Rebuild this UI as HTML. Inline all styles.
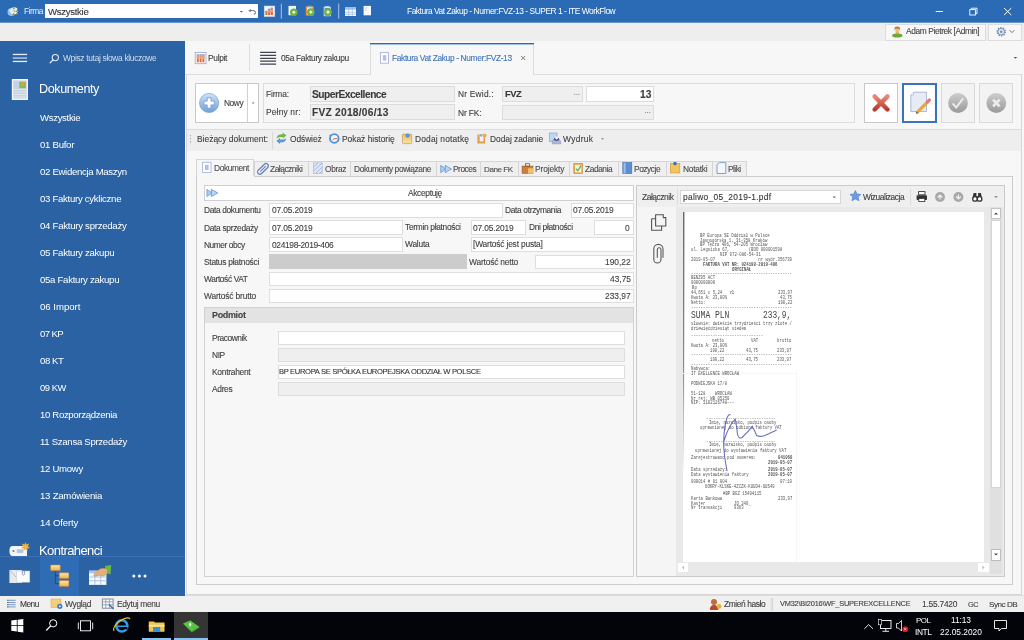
<!DOCTYPE html>
<html><head><meta charset="utf-8"><style>
html,body{margin:0;padding:0}
body{width:1024px;height:640px;overflow:hidden;position:relative;font-family:"Liberation Sans",sans-serif;background:#f7f7f7}
.a{position:absolute}
.t{position:absolute;white-space:nowrap;will-change:transform;-webkit-text-stroke:0.1px currentColor}
svg{position:absolute;overflow:visible}
.r{position:absolute;white-space:pre;font-family:"Liberation Mono",monospace;transform-origin:0 50%}
</style></head><body>
<div class=a style='left:0px;top:0px;width:1024px;height:22px;background:#2b6bb6;'></div><div class=a style='left:45px;top:4px;width:213px;height:14px;background:#ffffff;'></div><div class=a style='left:0px;top:22px;width:1024px;height:19px;background:#eeeeee;'></div><div class=a style='left:0px;top:22px;width:1024px;height:1px;background:#6592c7;'></div><div class=a style='left:885px;top:24px;width:101px;height:17px;background:#f7f7f7;border:1px solid #dddddd;box-sizing:border-box;'></div><div class=a style='left:988px;top:24px;width:34px;height:17px;background:#f7f7f7;border:1px solid #dddddd;box-sizing:border-box;'></div><div class=a style='left:0px;top:41px;width:185px;height:555px;background:#2a62a3;'></div><div class=a style='left:0px;top:556px;width:185px;height:1px;background:#3a72b5;'></div><div class=a style='left:40px;top:557px;width:39px;height:39px;background:#2e6cb6;'></div><div class=a style='left:185px;top:41px;width:839px;height:555px;background:#f7f7f7;'></div><div class=a style='left:185px;top:74px;width:837px;height:1px;background:#dcdcdc;'></div><div class=a style='left:249px;top:44px;width:1px;height:27px;background:#dedede;'></div><div class=a style='left:370px;top:43px;width:164px;height:32px;background:#f7f7f7;border:1px solid #dcdcdc;box-sizing:border-box;border-bottom:none;'></div><div class=a style='left:370px;top:43px;width:164px;height:1px;background:#2b6cb8;'></div><div class=a style='left:370px;top:44px;width:164px;height:1px;background:#9dbde3;'></div><div class=a style='left:186px;top:74px;width:836px;height:521px;border:1px solid #d6d6d6;box-sizing:border-box;border-top:none;'></div><div class=a style='left:195px;top:83px;width:64px;height:40px;background:#ffffff;border:1px solid #c9c9c9;box-sizing:border-box;'></div><div class=a style='left:247px;top:84px;width:1px;height:38px;background:#d0d0d0;'></div><div class=a style='left:263px;top:83px;width:592px;height:40px;background:#f7f7f7;border:1px solid #dcdcdc;box-sizing:border-box;'></div><div class=a style='left:310px;top:86px;width:145px;height:16px;background:#efefef;border:1px solid #dcdcdc;box-sizing:border-box;'></div><div class=a style='left:310px;top:104px;width:145px;height:16px;background:#efefef;border:1px solid #dcdcdc;box-sizing:border-box;'></div><div class=a style='left:502px;top:86px;width:81px;height:16px;background:#efefef;border:1px solid #dcdcdc;box-sizing:border-box;'></div><div class=a style='left:586px;top:86px;width:68px;height:16px;background:#ffffff;border:1px solid #dcdcdc;box-sizing:border-box;'></div><div class=a style='left:502px;top:105px;width:152px;height:15px;background:#efefef;border:1px solid #dcdcdc;box-sizing:border-box;'></div><div class=a style='left:864px;top:83px;width:34px;height:40px;background:#ffffff;border:1px solid #c9c9c9;box-sizing:border-box;'></div><div class=a style='left:902px;top:83px;width:35px;height:40px;background:#ffffff;border:1px solid #3b73b9;box-sizing:border-box;border-width:2px;'></div><div class=a style='left:941px;top:83px;width:34px;height:40px;background:#f3f3f3;border:1px solid #d9d9d9;box-sizing:border-box;'></div><div class=a style='left:979px;top:83px;width:34px;height:40px;background:#f3f3f3;border:1px solid #d9d9d9;box-sizing:border-box;'></div><div class=a style='left:186px;top:129px;width:836px;height:1px;background:#dcdcdc;'></div><div class=a style='left:187px;top:130px;width:834px;height:21px;background:#eeeeee;'></div><div class=a style='left:272px;top:132px;width:1px;height:17px;background:#d8d8d8;'></div><div class=a style='left:196px;top:159px;width:58px;height:18px;background:#f7f7f7;border:1px solid #d6d6d6;box-sizing:border-box;border-bottom:none;'></div><div class=a style='left:254px;top:161px;width:55px;height:16px;background:#efefef;border:1px solid #d6d6d6;box-sizing:border-box;'></div><div class=a style='left:308px;top:161px;width:43px;height:16px;background:#efefef;border:1px solid #d6d6d6;box-sizing:border-box;'></div><div class=a style='left:350px;top:161px;width:87px;height:16px;background:#efefef;border:1px solid #d6d6d6;box-sizing:border-box;'></div><div class=a style='left:436px;top:161px;width:45px;height:16px;background:#efefef;border:1px solid #d6d6d6;box-sizing:border-box;'></div><div class=a style='left:480px;top:161px;width:39px;height:16px;background:#efefef;border:1px solid #d6d6d6;box-sizing:border-box;'></div><div class=a style='left:518px;top:161px;width:52px;height:16px;background:#efefef;border:1px solid #d6d6d6;box-sizing:border-box;'></div><div class=a style='left:569px;top:161px;width:50px;height:16px;background:#efefef;border:1px solid #d6d6d6;box-sizing:border-box;'></div><div class=a style='left:618px;top:161px;width:49px;height:16px;background:#efefef;border:1px solid #d6d6d6;box-sizing:border-box;'></div><div class=a style='left:666px;top:161px;width:47px;height:16px;background:#efefef;border:1px solid #d6d6d6;box-sizing:border-box;'></div><div class=a style='left:712px;top:161px;width:35px;height:16px;background:#efefef;border:1px solid #d6d6d6;box-sizing:border-box;'></div><div class=a style='left:196px;top:176px;width:817px;height:409px;border:1px solid #cdcdcd;box-sizing:border-box;'></div><div class=a style='left:197px;top:176px;width:57px;height:1px;background:#f7f7f7;'></div><div class=a style='left:204px;top:185px;width:430px;height:16px;background:#ffffff;border:1px solid #d0d0d0;box-sizing:border-box;'></div><div class=a style='left:269px;top:203px;width:234px;height:15px;background:#ffffff;border:1px solid #dedede;box-sizing:border-box;'></div><div class=a style='left:571px;top:203px;width:63px;height:15px;background:#ffffff;border:1px solid #dedede;box-sizing:border-box;'></div><div class=a style='left:269px;top:220px;width:134px;height:15px;background:#ffffff;border:1px solid #dedede;box-sizing:border-box;'></div><div class=a style='left:471px;top:220px;width:55px;height:15px;background:#ffffff;border:1px solid #dedede;box-sizing:border-box;'></div><div class=a style='left:594px;top:220px;width:40px;height:15px;background:#ffffff;border:1px solid #dedede;box-sizing:border-box;'></div><div class=a style='left:269px;top:237px;width:134px;height:15px;background:#ffffff;border:1px solid #dedede;box-sizing:border-box;'></div><div class=a style='left:471px;top:237px;width:163px;height:15px;background:#ffffff;border:1px solid #dedede;box-sizing:border-box;'></div><div class=a style='left:269px;top:254px;width:198px;height:15px;background:#cccccc;'></div><div class=a style='left:535px;top:255px;width:99px;height:14px;background:#ffffff;border:1px solid #dedede;box-sizing:border-box;'></div><div class=a style='left:269px;top:272px;width:365px;height:14px;background:#ffffff;border:1px solid #dedede;box-sizing:border-box;'></div><div class=a style='left:269px;top:289px;width:365px;height:14px;background:#ffffff;border:1px solid #dedede;box-sizing:border-box;'></div><div class=a style='left:204px;top:307px;width:430px;height:270px;border:1px solid #d2d2d2;box-sizing:border-box;'></div><div class=a style='left:205px;top:308px;width:428px;height:15px;background:#e3e3e3;'></div><div class=a style='left:278px;top:331px;width:347px;height:14px;background:#ffffff;border:1px solid #dedede;box-sizing:border-box;'></div><div class=a style='left:278px;top:348px;width:347px;height:14px;background:#efefef;border:1px solid #efefef;box-sizing:border-box;'></div><div class=a style='left:278px;top:348px;width:347px;height:14px;border:1px solid #dedede;box-sizing:border-box;'></div><div class=a style='left:278px;top:365px;width:347px;height:14px;background:#ffffff;border:1px solid #dedede;box-sizing:border-box;'></div><div class=a style='left:278px;top:382px;width:347px;height:14px;background:#efefef;border:1px solid #efefef;box-sizing:border-box;'></div><div class=a style='left:278px;top:382px;width:347px;height:14px;border:1px solid #dedede;box-sizing:border-box;'></div><div class=a style='left:636px;top:185px;width:369px;height:392px;background:#f5f5f5;border:1px solid #cbcbcb;box-sizing:border-box;'></div><div class=a style='left:637px;top:186px;width:367px;height:21px;background:#efefef;'></div><div class=a style='left:677px;top:188px;width:1px;height:17px;background:#dddddd;'></div><div class=a style='left:680px;top:190px;width:161px;height:14px;background:#ffffff;border:1px solid #d6d6d6;box-sizing:border-box;'></div><div class=a style='left:910px;top:189px;width:1px;height:16px;background:#dddddd;'></div><div class=a style='left:676px;top:207px;width:328px;height:369px;background:#e9e9e9;'></div><div class=a style='left:683px;top:212px;width:301px;height:350px;background:#ffffff;'></div><div class=a style='left:683px;top:212px;width:1px;height:350px;background:linear-gradient(#6a6a6a,#8a8a8a 45%,rgba(160,160,160,0) 75%);'></div><div class=a style='left:684px;top:212px;width:1px;height:208px;background:linear-gradient(rgba(120,120,120,0.5),rgba(200,200,200,0));'></div><div class=a style='left:678px;top:563px;width:10px;height:9px;background:#ffffff;'></div><div class=a style='left:796px;top:370px;width:1px;height:192px;background:#f6f6f6;'></div><div class=a style='left:683px;top:373px;width:113px;height:1px;background:#f7f7f7;'></div><div class=a style='left:990px;top:207px;width:12px;height:367px;background:#e0e0e0;'></div><div class=a style='left:991px;top:208px;width:10px;height:11px;background:#ffffff;border:1px solid #c4c4c4;box-sizing:border-box;'></div><div class=a style='left:991px;top:220px;width:10px;height:268px;background:#ffffff;border:1px solid #d4d4d4;box-sizing:border-box;'></div><div class=a style='left:991px;top:549px;width:10px;height:12px;background:#ffffff;border:1px solid #bdbdbd;box-sizing:border-box;'></div><div class=a style='left:978px;top:563px;width:11px;height:9px;background:#ffffff;'></div><div class=a style='left:0px;top:596px;width:1024px;height:16px;background:#f0f0f0;'></div><div class=a style='left:185px;top:595px;width:839px;height:1px;background:#dcdcdc;'></div><div class=a style='left:772px;top:598px;width:1px;height:13px;background:#d6d6d6;'></div><div class=a style='left:0px;top:612px;width:1024px;height:28px;background:#03040a;'></div><div class=a style='left:174px;top:612px;width:34px;height:28px;background:#353535;'></div><div class=a style='left:142px;top:638px;width:29px;height:2px;background:#88c2ee;'></div><div class=a style='left:174px;top:638px;width:34px;height:2px;background:#88c2ee;'></div>
<div style='position:absolute;left:0;top:0;width:1024px;height:640px;filter:blur(0.3px)'><div class=r style='left:700.30px;top:233.30px;height:6px;line-height:6px;font-size:5.2px;transform:scaleX(0.772);color:#555;'>BP Europa SE Oddział w Polsce</div><div class=r style='left:699.50px;top:237.60px;height:6px;line-height:6px;font-size:5.2px;transform:scaleX(0.772);color:#555;'>Jasnogórska 1, 31-358 Kraków</div><div class=r style='left:700.30px;top:242.20px;height:6px;line-height:6px;font-size:5.2px;transform:scaleX(0.772);color:#555;'>BP Tęcza 406, 54-205 Wrocław</div><div class=r style='left:690.60px;top:247.30px;height:6px;line-height:6px;font-size:5.2px;transform:scaleX(0.772);color:#555;'>ul. Legnicka 67,        (BDO 000001598</div><div class=r style='left:720.30px;top:252.30px;height:6px;line-height:6px;font-size:5.2px;transform:scaleX(0.772);color:#555;'>NIP 972-086-54-31</div><div class=r style='left:690.60px;top:257.00px;height:6px;line-height:6px;font-size:5.2px;transform:scaleX(0.772);color:#555;'>2019-05-07                  nr wydr.356739</div><div class=r style='left:703.00px;top:261.80px;height:6px;line-height:6px;font-size:5.2px;transform:scaleX(0.772);color:#555;font-weight:700;'>FAKTURA VAT NR: 024198-2019-406</div><div class=r style='left:731.60px;top:266.50px;height:6px;line-height:6px;font-size:5.2px;transform:scaleX(0.772);color:#555;font-weight:700;'>ORYGINAŁ</div><div class=r style='left:690.60px;top:271.20px;height:6px;line-height:6px;font-size:5.2px;transform:scaleX(0.772);color:#6a6a6a;'>------------------------------------------</div><div class=r style='left:690.60px;top:275.40px;height:6px;line-height:6px;font-size:5.2px;transform:scaleX(0.772);color:#555;'>BENZ95 ACT</div><div class=r style='left:690.60px;top:280.10px;height:6px;line-height:6px;font-size:5.2px;transform:scaleX(0.772);color:#555;'>0000000000</div><div class=r style='left:692.00px;top:284.50px;height:6px;line-height:6px;font-size:5.2px;transform:scaleX(0.772);color:#555;'>Bp</div><div class=r style='left:690.60px;top:290.30px;height:6px;line-height:6px;font-size:5.2px;transform:scaleX(0.772);color:#555;'>44,651 x 5,24   zł</div><div class=r style='left:777.54px;top:290.30px;height:6px;line-height:6px;font-size:5.2px;transform:scaleX(0.772);color:#555;'>233,97</div><div class=r style='left:690.60px;top:294.60px;height:6px;line-height:6px;font-size:5.2px;transform:scaleX(0.772);color:#555;'>Kwota A: 23,00%</div><div class=r style='left:779.95px;top:294.60px;height:6px;line-height:6px;font-size:5.2px;transform:scaleX(0.772);color:#555;'>43,75</div><div class=r style='left:690.60px;top:299.50px;height:6px;line-height:6px;font-size:5.2px;transform:scaleX(0.772);color:#555;'>Netto:</div><div class=r style='left:777.54px;top:299.50px;height:6px;line-height:6px;font-size:5.2px;transform:scaleX(0.772);color:#555;'>190,22</div><div class=r style='left:690.60px;top:304.50px;height:6px;line-height:6px;font-size:5.2px;transform:scaleX(0.772);color:#6a6a6a;'>------------------------------------------</div><div class=r style='left:690.60px;top:311.50px;height:6px;line-height:6px;font-size:11.5px;transform:scaleX(0.696);color:#444;'>SUMA PLN</div><div class=r style='left:762.80px;top:311.50px;height:6px;line-height:6px;font-size:11.5px;transform:scaleX(0.681);color:#444;'>233,9,</div><div class=r style='left:690.60px;top:321.40px;height:6px;line-height:6px;font-size:5.2px;transform:scaleX(0.772);color:#555;'>słownie: dwieście trzydzieści trzy złote /</div><div class=r style='left:690.60px;top:325.90px;height:6px;line-height:6px;font-size:5.2px;transform:scaleX(0.772);color:#555;'>dziewięćdziesiąt siedem</div><div class=r style='left:690.60px;top:333.40px;height:6px;line-height:6px;font-size:5.2px;transform:scaleX(0.772);color:#6a6a6a;'>------------------------------</div><div class=r style='left:712.00px;top:338.00px;height:6px;line-height:6px;font-size:5.2px;transform:scaleX(0.772);color:#555;'>netto</div><div class=r style='left:751.00px;top:338.00px;height:6px;line-height:6px;font-size:5.2px;transform:scaleX(0.772);color:#555;'>VAT</div><div class=r style='left:776.54px;top:338.00px;height:6px;line-height:6px;font-size:5.2px;transform:scaleX(0.772);color:#555;'>brutto</div><div class=r style='left:690.60px;top:342.80px;height:6px;line-height:6px;font-size:5.2px;transform:scaleX(0.772);color:#555;'>Kwota A: 23,00%</div><div class=r style='left:710.04px;top:347.80px;height:6px;line-height:6px;font-size:5.2px;transform:scaleX(0.772);color:#555;'>190,22</div><div class=r style='left:746.45px;top:347.80px;height:6px;line-height:6px;font-size:5.2px;transform:scaleX(0.772);color:#555;'>43,75</div><div class=r style='left:776.54px;top:347.80px;height:6px;line-height:6px;font-size:5.2px;transform:scaleX(0.772);color:#555;'>233,97</div><div class=r style='left:690.60px;top:352.20px;height:6px;line-height:6px;font-size:5.2px;transform:scaleX(0.772);color:#6a6a6a;'>------------------------------------------</div><div class=r style='left:710.04px;top:357.30px;height:6px;line-height:6px;font-size:5.2px;transform:scaleX(0.772);color:#555;'>190,22</div><div class=r style='left:746.45px;top:357.30px;height:6px;line-height:6px;font-size:5.2px;transform:scaleX(0.772);color:#555;'>43,75</div><div class=r style='left:776.54px;top:357.30px;height:6px;line-height:6px;font-size:5.2px;transform:scaleX(0.772);color:#555;'>233,97</div><div class=r style='left:690.60px;top:362.30px;height:6px;line-height:6px;font-size:5.2px;transform:scaleX(0.772);color:#6a6a6a;'>------------------------------------------</div><div class=r style='left:690.60px;top:366.20px;height:6px;line-height:6px;font-size:5.2px;transform:scaleX(0.772);color:#555;'>Nabywca:</div><div class=r style='left:690.60px;top:371.20px;height:6px;line-height:6px;font-size:5.2px;transform:scaleX(0.772);color:#555;'>IT EXELLENCE WROCŁAW</div><div class=r style='left:690.60px;top:381.00px;height:6px;line-height:6px;font-size:5.2px;transform:scaleX(0.772);color:#555;'>PODWIEJSKA 17/8</div><div class=r style='left:690.60px;top:390.60px;height:6px;line-height:6px;font-size:5.2px;transform:scaleX(0.772);color:#555;'>51-128    WROCŁAW</div><div class=r style='left:690.60px;top:395.50px;height:6px;line-height:6px;font-size:5.2px;transform:scaleX(0.772);color:#555;'>Nr rej: WB 05250</div><div class=r style='left:690.60px;top:400.20px;height:6px;line-height:6px;font-size:5.2px;transform:scaleX(0.772);color:#555;'>NIP: 1102126748---</div><div class=r style='left:706.40px;top:415.50px;height:6px;line-height:6px;font-size:5.2px;transform:scaleX(0.772);color:#6a6a6a;'>-----------------------------</div><div class=r style='left:708.50px;top:419.50px;height:6px;line-height:6px;font-size:5.2px;transform:scaleX(0.772);color:#555;'>Imię, nazwisko, podpis osoby</div><div class=r style='left:700.30px;top:424.60px;height:6px;line-height:6px;font-size:5.2px;transform:scaleX(0.772);color:#555;'>uprawnionej do odbioru faktury VAT</div><div class=r style='left:706.40px;top:438.80px;height:6px;line-height:6px;font-size:5.2px;transform:scaleX(0.772);color:#6a6a6a;'>-----------------------------</div><div class=r style='left:708.50px;top:442.30px;height:6px;line-height:6px;font-size:5.2px;transform:scaleX(0.772);color:#555;'>Imię, nazwisko, podpis osoby</div><div class=r style='left:695.00px;top:447.60px;height:6px;line-height:6px;font-size:5.2px;transform:scaleX(0.772);color:#555;'>uprawnionej do wystawienia faktury VAT</div><div class=r style='left:690.60px;top:454.90px;height:6px;line-height:6px;font-size:5.2px;transform:scaleX(0.772);color:#555;'>Zarejestrowano pod numerem:</div><div class=r style='left:777.84px;top:454.90px;height:6px;line-height:6px;font-size:5.2px;transform:scaleX(0.772);color:#555;font-weight:700;'>041068</div><div class=r style='left:768.20px;top:459.60px;height:6px;line-height:6px;font-size:5.2px;transform:scaleX(0.772);color:#555;font-weight:700;'>2019-05-07</div><div class=r style='left:690.60px;top:467.20px;height:6px;line-height:6px;font-size:5.2px;transform:scaleX(0.772);color:#555;'>Data sprzedaży:</div><div class=r style='left:768.20px;top:467.20px;height:6px;line-height:6px;font-size:5.2px;transform:scaleX(0.772);color:#555;font-weight:700;'>2019-05-07</div><div class=r style='left:690.60px;top:472.00px;height:6px;line-height:6px;font-size:5.2px;transform:scaleX(0.772);color:#555;'>Data wystawienia faktury</div><div class=r style='left:768.20px;top:472.00px;height:6px;line-height:6px;font-size:5.2px;transform:scaleX(0.772);color:#555;font-weight:700;'>2019-05-07</div><div class=r style='left:690.60px;top:479.00px;height:6px;line-height:6px;font-size:5.2px;transform:scaleX(0.772);color:#555;'>000014 # 01 004</div><div class=r style='left:780.25px;top:479.00px;height:6px;line-height:6px;font-size:5.2px;transform:scaleX(0.772);color:#555;'>07:19</div><div class=r style='left:705.20px;top:483.50px;height:6px;line-height:6px;font-size:5.2px;transform:scaleX(0.772);color:#555;'>6OKRY-KLSKE-4ZCZK-KUUD4-UUS49</div><div class=r style='left:723.20px;top:490.80px;height:6px;line-height:6px;font-size:5.2px;transform:scaleX(0.772);color:#555;'>#BP BGZ 15494115</div><div class=r style='left:690.60px;top:495.90px;height:6px;line-height:6px;font-size:5.2px;transform:scaleX(0.772);color:#555;'>Karta Bankowa</div><div class=r style='left:777.84px;top:495.90px;height:6px;line-height:6px;font-size:5.2px;transform:scaleX(0.772);color:#555;'>233,97</div><div class=r style='left:690.60px;top:500.70px;height:6px;line-height:6px;font-size:5.2px;transform:scaleX(0.772);color:#555;'>Kasjer</div><div class=r style='left:734.40px;top:500.70px;height:6px;line-height:6px;font-size:5.2px;transform:scaleX(0.772);color:#555;'>JD 240_</div><div class=r style='left:690.60px;top:505.20px;height:6px;line-height:6px;font-size:5.2px;transform:scaleX(0.772);color:#555;'>Nr transakcji</div><div class=r style='left:734.40px;top:505.20px;height:6px;line-height:6px;font-size:5.2px;transform:scaleX(0.772);color:#555;'>9363</div></div><svg style="left:700px;top:400px" width="100" height="80" viewBox="700 400 100 80"><path d="M727 470.6 Q723 450 723.8 440 Q724.2 425 727 418 Q729 413.5 730.2 414.8 M724 441 Q729 425 735.2 419.2 Q737 428 737.5 434 Q738.6 439.5 742 437.5 Q748 432 752.2 426.3 Q755 431 756.6 435.6 Q760 437.2 765 435.6 Q771 432.5 776.3 430.2" fill="none" stroke="#5b5fb8" stroke-width="1.1" stroke-linecap="round" opacity="0.9"/></svg>
<!-- ===== TITLE BAR ICONS ===== -->
<svg style="left:0px;top:0px" width="1024" height="22" viewBox="0 0 1024 22">
  <!-- globe -->
  <circle cx="11.6" cy="12" r="4.1" fill="#8fc0f2"/>
  <circle cx="10.5" cy="10.5" r="1.6" fill="#cfe4fb"/>
  <circle cx="14.2" cy="11.1" r="3.9" fill="#ecebe4"/>
  <path d="M17.4 9 A3.9 3.9 0 0 1 12.5 14.6" fill="none" stroke="#5a5a52" stroke-width="0.8"/>
  <circle cx="13.9" cy="8.4" r="0.8" fill="#3cab3c"/><circle cx="16.6" cy="11.3" r="0.8" fill="#3cab3c"/><circle cx="13.6" cy="14" r="0.8" fill="#3cab3c"/>
  <path d="M14 9.6 V11.4 H15.6" stroke="#6a6a6a" stroke-width="0.5" fill="none"/>
  <!-- combo arrows -->
  <path d="M239.8 11 L243 11 L241.4 12.6 Z" fill="#555"/>
  <path d="M250.6 9.2 L249.2 10.6 L250.6 12 M249.4 10.6 H253.2 Q255.6 10.6 255.6 12.6 Q255.6 14.3 253.8 14.3" stroke="#5a5a5a" stroke-width="0.9" fill="none"/>
  <!-- chart icon -->
  <rect x="264.2" y="6" width="10.6" height="10.6" fill="#f4f6fb" stroke="#c8d4ea" stroke-width="0.5"/>
  <rect x="265.4" y="10.9" width="1.9" height="4.1" fill="#e3663c"/><rect x="265.4" y="10.9" width="1.9" height="1.4" fill="#7aa8dc"/>
  <rect x="267.9" y="8.8" width="2.3" height="6.2" fill="#e3663c"/><rect x="267.9" y="8.8" width="2.3" height="2" fill="#7aa8dc"/><rect x="267.9" y="10.8" width="2.3" height="1.6" fill="#eea24a"/>
  <rect x="270.7" y="7.8" width="2.2" height="7.2" fill="#e3663c"/><rect x="270.7" y="7.8" width="2.2" height="2.2" fill="#7aa8dc"/><rect x="270.7" y="10" width="2.2" height="2" fill="#eea24a"/>
  <rect x="280.8" y="3.7" width="1" height="15" fill="#a9c3e6"/>
  <!-- doc + green -->
  <rect x="288.5" y="5.9" width="7.5" height="9.3" fill="#f4f6fa"/>
  <circle cx="293.8" cy="12.2" r="3.8" fill="#6fb23c"/><path d="M291.8 12.2 L293.8 10.4 L295.8 12.2 L293.8 14 Z" fill="#eaf5dc"/>
  <!-- clipboard + green -->
  <rect x="305.8" y="6.3" width="7.8" height="9.3" fill="#e9953c"/><rect x="307" y="7.3" width="5.4" height="7.3" fill="#f8f2e6"/><rect x="308" y="5.6" width="3.4" height="1.6" fill="#8c9cb4"/>
  <circle cx="310.8" cy="12.1" r="3.8" fill="#6fb23c"/><path d="M308.8 12.1 L310.8 10.3 L312.8 12.1 L310.8 13.9 Z" fill="#eaf5dc"/>
  <!-- db/person + green -->
  <path d="M323.7 7 Q327.2 4.8 330.8 7 V16.3 H323.7 Z" fill="#cfe0f2"/><rect x="324.6" y="8" width="5.3" height="7.5" fill="#4f86c8"/>
  <circle cx="328" cy="12.1" r="3.8" fill="#6fb23c"/><path d="M326 12.1 L328 10.3 L330 12.1 L328 13.9 Z" fill="#eaf5dc"/>
  <rect x="338.2" y="3.5" width="1" height="15.2" fill="#a9c3e6"/>
  <!-- grid -->
  <rect x="345" y="7.4" width="11" height="8.6" fill="#f6f9fd"/>
  <rect x="345" y="7.4" width="11" height="2.2" fill="#9cc0e8"/>
  <path d="M345 12.3 H356 M345 14.3 H356 M348.7 7.4 V16 M352.3 7.4 V16" stroke="#8fb3de" stroke-width="0.6"/>
  <!-- doc -->
  <rect x="363.6" y="5.9" width="7.4" height="9.4" fill="#f6f8fb"/>
  <path d="M365 8 H367 M365 10 H366.5" stroke="#9ab" stroke-width="0.5"/>
  <!-- window controls -->
  <rect x="935.7" y="11" width="7.2" height="1" fill="#ffffff"/>
  <rect x="969.8" y="9.6" width="5.6" height="5.4" fill="none" stroke="#fff" stroke-width="0.9"/>
  <path d="M971.4 9.6 V8.2 H977 V13.6 H975.4" fill="none" stroke="#fff" stroke-width="0.9"/>
  <path d="M1004.1 8.1 L1011.3 15 M1011.3 8.1 L1004.1 15" stroke="#fff" stroke-width="1"/>
</svg>
<!-- ===== GREY BAND ===== -->
<svg style="left:880px;top:22px" width="144" height="20" viewBox="880 22 144 20">
  <!-- person icon -->
  <ellipse cx="897.3" cy="35.6" rx="5.2" ry="2" fill="#6aaa3a"/>
  <path d="M895.6 33.8 L896 31.5 H898.6 L899 33.8 Q897.3 34.8 895.6 33.8 Z" fill="#d49a4a"/>
  <ellipse cx="897.3" cy="30.4" rx="2" ry="2.6" fill="#f0c070"/>
  <path d="M894.6 30.6 Q894.2 26.6 896 26.8 Q897.3 26 898.6 26.8 Q900.4 26.6 900 30.6 L899.2 29 Q897.3 28.2 895.4 29 Z" fill="#b9773a"/>
  <!-- gear -->
  <g transform="translate(1001.2 31.7)">
    <circle r="4" fill="none" stroke="#7389b0" stroke-width="1.6" stroke-dasharray="1.3 1.2"/>
    <circle r="3.3" fill="#e3e9f3" stroke="#7389b0" stroke-width="0.9"/>
    <circle r="1.2" fill="#7389b0"/>
  </g>
  <path d="M1009.5 30.2 L1011.9 32.6 L1014.3 30.2" fill="none" stroke="#666" stroke-width="0.9"/>
</svg>
<!-- ===== SIDEBAR ===== -->
<svg style="left:0px;top:41px" width="185" height="555" viewBox="0 41 185 555">
  <rect x="12.8" y="53.8" width="14.3" height="1.3" fill="#e8eef7"/>
  <rect x="12.8" y="57.4" width="14.3" height="1.3" fill="#c8d5ea"/>
  <rect x="12.8" y="60.8" width="14.3" height="1.3" fill="#e8eef7"/>
  <circle cx="55.3" cy="57.6" r="3.1" fill="none" stroke="#e3eaf5" stroke-width="1.1"/>
  <path d="M53.1 59.9 L50.2 62.8" stroke="#e3eaf5" stroke-width="1.3" stroke-linecap="round"/>
  <!-- dokumenty icon -->
  <rect x="11.8" y="79" width="16.2" height="21" fill="#f4f6fa"/>
  <rect x="13.2" y="80.4" width="13.4" height="18.2" fill="#c9d2e2"/>
  <path d="M13.2 89.5 H26.6 M13.2 92 H26.6 M13.2 94.5 H26.6 M13.2 97 H26.6" stroke="#e6ebf3" stroke-width="0.8"/>
  <rect x="19.3" y="81.8" width="6.6" height="6.4" fill="#7cc050"/>
  <circle cx="23" cy="84" r="2" fill="#e89a40"/>
  <!-- kontrahenci tag -->
  <path d="M12.5 546 H27 V556 H12.5 Q9.4 556 9.4 551 Q9.4 546 12.5 546 Z" fill="#f2f4f8"/>
  <circle cx="13.5" cy="551" r="1.1" fill="#5a7bb0"/>
  <rect x="16.8" y="549.3" width="6.5" height="3.6" fill="#b9c3d6"/>
  <path d="M25.5 542 L26.4 544.6 L29.3 543.6 L27.8 546.2 L30 548 L27.2 548.4 L27.6 551 L25.5 549.3 L23.4 551 L23.8 548.4 L21 548 L23.2 546.2 L21.7 543.6 L24.6 544.6 Z" fill="#f2b43a"/>
  <!-- bottom bar icons: mail -->
  <path d="M9.4 570 H22 V583 H9.4 Z" fill="#e4e8f0"/>
  <path d="M9.6 570.2 L16 577 L21.8 570.2" fill="none" stroke="#a8b2c4" stroke-width="0.7"/>
  <rect x="16.6" y="571" width="13.2" height="11.2" fill="#fbfcfe" stroke="#c0c8d6" stroke-width="0.5"/>
  <path d="M22.4 569.6 V574.6 Q23.4 576 24.4 574.6 V569.8" fill="none" stroke="#6a7fa6" stroke-width="0.7"/>
  <!-- tree -->
  <defs><linearGradient id="gy" x1="0" y1="0" x2="0" y2="1"><stop offset="0" stop-color="#fde8a8"/><stop offset="1" stop-color="#eeae4c"/></linearGradient></defs>
  <path d="M55.3 570.7 V583.6 H59.2 M55.3 575.7 H59.2" fill="none" stroke="#2a3a5a" stroke-width="0.7"/>
  <rect x="50.6" y="564.9" width="9.7" height="5.8" rx="0.6" fill="url(#gy)" stroke="#b97e34" stroke-width="0.6"/>
  <rect x="59.2" y="572.8" width="9.7" height="5.8" rx="0.6" fill="url(#gy)" stroke="#b97e34" stroke-width="0.6"/>
  <rect x="59.2" y="580.5" width="9.7" height="6.1" rx="0.6" fill="url(#gy)" stroke="#b97e34" stroke-width="0.6"/>
  <!-- table + hand -->
  <rect x="89" y="570.7" width="17.4" height="14.2" fill="#f6f9fd"/>
  <rect x="89" y="570.7" width="17.4" height="2.6" fill="#a9c6ea"/>
  <path d="M89 577 H106.4 M89 580.8 H106.4 M94.9 570.7 V584.9 M100.7 570.7 V584.9" stroke="#9dbbe2" stroke-width="0.8"/>
  <path d="M105 566 L111.2 565 L110.5 574.4 L106 573 Z" fill="#6bb842"/>
  <path d="M93.4 575.3 L98 570.5 Q100 568 104 568.3 L107.5 569 L107.2 573.8 Q104 576.5 101.5 576 L99.5 575.2 L96 576.2 Q94 576.8 93.4 575.3 Z" fill="#e3b07a" stroke="#b07a48" stroke-width="0.4"/>
  <circle cx="133.8" cy="575.9" r="1.5" fill="#fff"/><circle cx="139.4" cy="575.9" r="1.5" fill="#fff"/><circle cx="145" cy="575.9" r="1.5" fill="#fff"/>
</svg>
<!-- ===== CONTENT TAB STRIP ===== -->
<svg style="left:185px;top:41px" width="839" height="90" viewBox="185 41 839 90">
  <!-- pulpit icon -->
  <rect x="195.2" y="52.5" width="10.8" height="11.2" fill="#ffffff" stroke="#93a5d2" stroke-width="0.8"/>
  <rect x="196.8" y="54.3" width="2" height="8" fill="#e46a46"/><rect x="196.8" y="54.3" width="2" height="2.4" fill="#8eb4e4"/><rect x="196.8" y="56.7" width="2" height="2.2" fill="#f0a95c"/>
  <rect x="199.6" y="54.3" width="2" height="8" fill="#e46a46"/><rect x="199.6" y="54.3" width="2" height="2.4" fill="#8eb4e4"/><rect x="199.6" y="56.7" width="2" height="2.2" fill="#f0a95c"/>
  <rect x="202.4" y="54.3" width="2" height="8" fill="#e46a46"/><rect x="202.4" y="54.3" width="2" height="2.4" fill="#8eb4e4"/><rect x="202.4" y="56.7" width="2" height="2.2" fill="#f0a95c"/>
  <!-- lines icon -->
  <path d="M260.1 52.4 H276.1 M260.1 55.4 H276.1 M260.1 58.3 H276.1 M260.1 61.2 H276.1 M260.1 64.1 H276.1" stroke="#3e4452" stroke-width="1.3"/>
  <!-- active tab doc icon -->
  <rect x="380.5" y="52.6" width="8" height="10.6" fill="#fff" stroke="#a9b4dc" stroke-width="0.9"/>
  <rect x="382.9" y="55.2" width="3.4" height="5.4" fill="#b3bfe2"/>
  <path d="M521.2 56 L525.2 60 M525.2 56 L521.2 60" stroke="#707070" stroke-width="0.9"/>
  <path d="M1013.6 57 L1017.2 57 L1015.4 58.8 Z" fill="#555"/>
  <!-- Nowy plus -->
  <defs>
    <linearGradient id="gb" x1="0" y1="0" x2="0" y2="1"><stop offset="0" stop-color="#cfe3f6"/><stop offset="0.5" stop-color="#9fc2ea"/><stop offset="1" stop-color="#6d9fd9"/></linearGradient>
    <linearGradient id="gr" x1="0" y1="0" x2="0" y2="1"><stop offset="0" stop-color="#e9877c"/><stop offset="1" stop-color="#bb3a2e"/></linearGradient>
    <linearGradient id="gg" x1="0" y1="0" x2="0" y2="1"><stop offset="0" stop-color="#cdcdcd"/><stop offset="1" stop-color="#9a9a9a"/></linearGradient>
  </defs>
  <circle cx="209.1" cy="103" r="9.6" fill="url(#gb)" stroke="#7aa0d0" stroke-width="0.7"/>
  <path d="M207.2 97.8 H211 V101.1 H214.3 V104.9 H211 V108.2 H207.2 V104.9 H203.9 V101.1 H207.2 Z" fill="#ffffff" stroke="#6d95c8" stroke-width="0.8"/>
  <path d="M251.6 102.6 L254.6 102.6 L253.1 104.1 Z" fill="#777"/>
  <circle cx="574.8" cy="94.3" r="0.5" fill="#666"/><circle cx="576.9" cy="94.3" r="0.5" fill="#666"/><circle cx="579" cy="94.3" r="0.5" fill="#666"/>
  <circle cx="645.6" cy="112.6" r="0.5" fill="#666"/><circle cx="647.7" cy="112.6" r="0.5" fill="#666"/><circle cx="649.8" cy="112.6" r="0.5" fill="#666"/>
  <!-- red X -->
  <path d="M874.6 96.4 L887.5 109.5 M887.5 96.4 L874.6 109.5" stroke="url(#gr)" stroke-width="4.4" stroke-linecap="round"/>
  <!-- edit doc + pencil -->
  <path d="M913.5 92.2 H926.5 V111.5 H910.8 V95 Z" fill="#e6ebf5" stroke="#9eaccb" stroke-width="0.8"/>
  <path d="M910.8 95 H913.5 V92.2" fill="#fff" stroke="#9eaccb" stroke-width="0.6"/>
  <path d="M917 112.6 L928.2 101.3" stroke="#e8a838" stroke-width="3.2"/>
  <path d="M927.4 102 L929.5 99.9" stroke="#e07d80" stroke-width="3.2" stroke-linecap="round"/>
  <path d="M915.8 113.8 L916.4 111.2 L918.4 113.2 Z" fill="#555"/>
  <rect x="903.6" y="84.6" width="31.6" height="37" fill="none" stroke="#3b73b9" stroke-width="0.5" stroke-dasharray="1 1" opacity="0.6"/>
  <!-- grey check -->
  <circle cx="958" cy="103" r="9.9" fill="url(#gg)"/>
  <path d="M952.6 103.3 L956.2 107.4 L963.2 98.4" fill="none" stroke="#ededed" stroke-width="1.9"/>
  <circle cx="996.3" cy="103" r="9.9" fill="url(#gg)"/>
  <path d="M993 99.7 L999.6 106.3 M999.6 99.7 L993 106.3" stroke="#ededed" stroke-width="2.6"/>
</svg>
<!-- ===== TOOLBAR + TABS ===== -->
<svg style="left:185px;top:130px" width="839" height="80" viewBox="185 130 839 80">
  <circle cx="190.5" cy="135.7" r="0.55" fill="#888"/><circle cx="190.5" cy="138.8" r="0.55" fill="#888"/><circle cx="190.5" cy="141.9" r="0.55" fill="#888"/>
  <!-- refresh -->
  <path d="M276.6 138.4 Q277 134.2 282 134.2 H282.8 V132.6 L286.4 135.6 L282.8 138.6 V137 H282 Q278.8 137 276.6 138.4 Z" fill="#72b84a"/>
  <path d="M286.2 138.4 Q285.8 142.4 280.8 142.4 H280 V144 L276.4 141 L280 138 V139.6 H280.8 Q284 139.6 286.2 138.4 Z" fill="#5a9ad8"/>
  <!-- history -->
  <circle cx="334.3" cy="138.4" r="4.3" fill="#f6f8fb" stroke="#4d93dc" stroke-width="1.9"/>
  <path d="M334.3 138.6 H337 M334.3 138.6 L332.4 140" stroke="#d8463a" stroke-width="0.9"/>
  <path d="M329 135 L331.5 134.5 L330.8 137 Z" fill="#4d93dc"/>
  <!-- note -->
  <defs><linearGradient id="gn" x1="0" y1="0" x2="0" y2="1"><stop offset="0" stop-color="#efbf52"/><stop offset="1" stop-color="#f8e4a2"/></linearGradient></defs>
  <rect x="402.4" y="134.2" width="9.3" height="9.4" rx="0.8" fill="url(#gn)" stroke="#c49a64" stroke-width="0.7"/>
  <circle cx="407.6" cy="135.6" r="2.2" fill="#5b95d6"/>
  <!-- task -->
  <path d="M477.4 134.4 H479.8 V141.3 H483.3 V137 H485 V143.6 H477.4 Z" fill="#e4a048"/>
  <rect x="479.8" y="134.6" width="3.5" height="6.7" fill="#eef2fa"/>
  <path d="M479.8 134.2 H482.6 L482 136.6 H480.4 Z" fill="#8e9cc0"/>
  <circle cx="484.6" cy="135.4" r="2" fill="#eeae48"/>
  <!-- print -->
  <rect x="549.6" y="133" width="7.4" height="8.4" fill="#bcd8f2" stroke="#8aa2d6" stroke-width="0.7"/>
  <path d="M552.2 143.8 Q552 138.6 556.4 138.2 Q560.8 138.6 560.8 143.8 Z" fill="#aab8dc" stroke="#7f8fc0" stroke-width="0.6"/>
  <ellipse cx="556.5" cy="139.2" rx="2.8" ry="1.8" fill="#4e5a7e"/>
  <circle cx="556.6" cy="138" r="1.4" fill="#f4f6fc"/>
  <path d="M601 138.3 L604 138.3 L602.5 139.8 Z" fill="#777"/>
  <!-- tab icons -->
  <rect x="202.6" y="162.3" width="8.4" height="10.2" fill="#fff" stroke="#a9b4dc" stroke-width="0.9"/>
  <rect x="205" y="164.8" width="3.6" height="5.2" fill="#b3bfe2"/>
  <g transform="translate(263 168.9) rotate(-45)"><rect x="-6.6" y="-2.3" width="13.2" height="4.6" rx="2.3" fill="none" stroke="#6584b8" stroke-width="1.3"/><path d="M-4.6 0 H3.8" stroke="#6584b8" stroke-width="1"/></g>
  <circle cx="259.4" cy="171.8" r="1" fill="#f0f0f0"/>
  <rect x="313.4" y="162.9" width="8.8" height="10.5" fill="#dfe6f5" stroke="#a3b2d8" stroke-width="0.6"/>
  <path d="M313.6 167 L318 162.9 M313.6 171 L322 163 M315.6 173.3 L322.1 167.4 M319.4 173.3 L322.1 171" stroke="#9fb1dc" stroke-width="0.9"/>
  <path d="M440.7 165.3 L446 169 L440.7 172.6 Z" fill="#a9cbf2" stroke="#5f92d6" stroke-width="0.7"/><path d="M445.2 165.3 L451.4 169 L445.2 172.6 Z" fill="#b9d5f5" stroke="#4f86d0" stroke-width="0.7"/>
  <rect x="522" y="166" width="11" height="7.5" fill="#c9803e" stroke="#9a5a24" stroke-width="0.5"/>
  <rect x="525.5" y="163.7" width="4" height="2.6" fill="none" stroke="#8a5a2a" stroke-width="0.8"/>
  <rect x="528" y="168.3" width="5.3" height="5.3" fill="#f2c26a"/>
  <rect x="573.8" y="163.3" width="8.8" height="10.3" fill="#e9a650" stroke="#c07a30" stroke-width="0.5"/>
  <rect x="575" y="164.8" width="6.4" height="7.6" fill="#eef3e8"/>
  <path d="M575.8 168.6 L577.8 170.8 L581 165.6" fill="none" stroke="#5cae3a" stroke-width="1.2"/>
  <rect x="622.8" y="162.6" width="9" height="11" fill="#5b8fd4" stroke="#3e6cb0" stroke-width="0.6"/>
  <rect x="623.6" y="163" width="2" height="10.3" fill="#9cc0ec"/>
  <rect x="670.3" y="163.5" width="9.5" height="9.5" fill="#f2c65a" stroke="#c9953a" stroke-width="0.6"/>
  <circle cx="675" cy="163.6" r="1.8" fill="#3b6fc2"/>
  <path d="M717 164.5 L719.5 162.6 H725.8 V173.5 H717 Z" fill="#f4f8fd" stroke="#7096c9" stroke-width="0.9"/>
  <!-- akceptuje arrow -->
  <path d="M206.9 189.3 L212.4 193 L206.9 196.6 Z" fill="#a9cbf2" stroke="#5f92d6" stroke-width="0.7"/><path d="M211.4 189.3 L217.8 193 L211.4 196.6 Z" fill="#b9d5f5" stroke="#4f86d0" stroke-width="0.7"/>
</svg>
<!-- ===== VIEWER ===== -->
<svg style="left:636px;top:185px" width="388" height="400" viewBox="636 185 388 400">
  <path d="M832.6 196.6 L835.8 196.6 L834.2 198.2 Z" fill="#666"/>
  <path d="M855.4 190.5 L857.1 194 L860.9 194.4 L858.1 197 L858.9 200.8 L855.4 198.9 L851.9 200.8 L852.7 197 L849.9 194.4 L853.7 194 Z" fill="#6c9de0" stroke="#3f6fb8" stroke-width="0.5"/>
  <!-- printer -->
  <rect x="916.6" y="195.2" width="10.4" height="4.8" rx="0.8" fill="#333"/>
  <rect x="918.6" y="191.6" width="6.4" height="3.2" fill="#fff" stroke="#333" stroke-width="0.9"/>
  <rect x="918.8" y="198.6" width="6" height="3" fill="#fff" stroke="#333" stroke-width="0.8"/>
  <circle cx="940" cy="197" r="5" fill="#a8a8a8"/><path d="M937.6 197.5 L940 195 L942.4 197.5 M940 195.3 V199.5" fill="none" stroke="#f2f2f2" stroke-width="1.2"/>
  <circle cx="958.4" cy="197" r="5" fill="#a8a8a8"/><path d="M956 196.5 L958.4 199 L960.8 196.5 M958.4 194.5 V198.7" fill="none" stroke="#f2f2f2" stroke-width="1.2"/>
  <!-- binoculars -->
  <path d="M973.6 193 H976.4 V196.2 H978.1 V193 H980.9 L982 198 H972.5 Z" fill="#333"/>
  <circle cx="975" cy="198.9" r="2.3" fill="#fff" stroke="#333" stroke-width="1.3"/>
  <circle cx="979.6" cy="198.9" r="2.3" fill="#fff" stroke="#333" stroke-width="1.3"/>
  <path d="M994.2 196.3 L997.8 196.3 L996 198.1 Z" fill="#777"/>
  <!-- copy & clip icons -->
  <path d="M651.6 218.8 H655.6 M651.6 218.8 V230.2 H661.6 V226" fill="none" stroke="#555" stroke-width="1.1"/>
  <path d="M655.6 214.7 H663.3 V217.6 H665.8 V226 H655.6 Z" fill="none" stroke="#555" stroke-width="1.1"/>
  <path d="M663 257.7 V249 A4.6 4.6 0 0 0 653.8 249 V259.4 A3.6 3.6 0 0 0 661 259.4 V249.6 A1.85 1.85 0 0 0 657.3 249.6 V257.7" fill="none" stroke="#595959" stroke-width="1.1"/>
  <path d="M994 214.6 L998 214.6 L996 212.4 Z" fill="#444"/>
  <path d="M994 553.5 L998 553.5 L996 555.5 Z" fill="#444"/>
  <path d="M982.5 565.5 L984.5 567.5 L982.5 569.5 Z" fill="#bbb"/>
  <path d="M684 565.5 L682 567.5 L684 569.5 Z" fill="#bbb"/>
</svg>
<!-- ===== STATUS BAR ===== -->
<svg style="left:0px;top:596px" width="1024" height="44" viewBox="0 596 1024 44">
  <path d="M7.2 600.3 H15.7 M7.2 602.5 H15.7 M7.2 604.7 H15.7 M7.2 606.9 H15.7" stroke="#6f8fc0" stroke-width="0.9"/>
  <path d="M7.2 600.3 H8.4 M7.2 602.5 H8.4 M7.2 604.7 H8.4 M7.2 606.9 H8.4" stroke="#3c5c90" stroke-width="0.9"/>
  <rect x="51" y="599" width="10" height="8.5" fill="#f4cf78" stroke="#d2a242" stroke-width="0.5"/>
  <circle cx="59.8" cy="606.3" r="2.6" fill="#3c7cc8"/><circle cx="59.8" cy="606.3" r="0.9" fill="#fff"/>
  <rect x="102.3" y="599" width="10.8" height="9.2" fill="#f6f8fb" stroke="#6a7890" stroke-width="0.8"/>
  <path d="M102.3 601.8 H113 M105.8 599 V608 M109.4 599 V608 M102.3 604.8 H113" stroke="#6a7890" stroke-width="0.6"/>
  <path d="M109 604.5 L113.6 609" stroke="#3c6fb0" stroke-width="1.4"/>
  <!-- zmien haslo icon -->
  <circle cx="714" cy="602" r="3" fill="#c46a3a"/>
  <path d="M709.8 610 Q710 605 714 605 Q718 605 718.4 610 Z" fill="#b4492e"/>
  <circle cx="719" cy="606.5" r="2.4" fill="#e8b030"/>
  <rect x="770.6" y="598" width="1" height="13" fill="#d9d9d9"/>
  <!-- taskbar -->
  <path d="M11.3 620.6 L16.8 619.8 V625.3 H11.3 Z M17.6 619.7 L23.3 618.9 V625.3 H17.6 Z M11.3 626.1 H16.8 V631.6 L11.3 630.8 Z M17.6 626.1 H23.3 V632.5 L17.6 631.7 Z" fill="#ffffff"/>
  <circle cx="53.2" cy="623.3" r="3.6" fill="none" stroke="#fff" stroke-width="1"/>
  <path d="M50.6 626 L46.2 630.5" stroke="#fff" stroke-width="1.1"/>
  <rect x="80.5" y="620.8" width="10" height="10" fill="none" stroke="#fff" stroke-width="0.9"/>
  <path d="M78.3 622.5 V629.2 M92.7 622.5 V629.2" stroke="#fff" stroke-width="0.9"/>
  <!-- IE -->
  <circle cx="121.8" cy="625.8" r="5.6" fill="none" stroke="#2f9ee8" stroke-width="2.5"/>
  <rect x="116" y="625.5" width="11" height="1.6" fill="#2f9ee8"/>
  <rect x="121.5" y="627.2" width="6" height="2" fill="#000"/>
  <path d="M114 631 Q112 627 120 621 Q128 616 130 619" fill="none" stroke="#f0b92c" stroke-width="1.2"/>
  <!-- explorer -->
  <path d="M148.8 621.4 H154 L155 622.4 H164.5 V631.8 H148.8 Z" fill="#f2c54c"/>
  <rect x="148.8" y="624.8" width="15.7" height="1.8" fill="#fbe7a0"/>
  <rect x="153" y="627" width="7.3" height="4.8" fill="#3a8fd6"/>
  <!-- green app -->
  <path d="M183 623.8 L190.2 620.6 L199.7 627.4 L191.8 632.4 Z" fill="#3f9a34"/>
  <path d="M183 623.4 L190.2 620.4 L199.2 626.8 L191.6 631.2 Z" fill="#5cbf46"/>
  <path d="M188.6 624.6 L190.2 622.6 L191.8 624.6 Z M189.4 624.4 H191 V626.2 H189.4 Z" fill="#eef8ea"/>
  <!-- tray -->
  <path d="M864.4 628.8 L868.7 624.6 L873 628.8" fill="none" stroke="#fff" stroke-width="0.9"/>
  <rect x="880.5" y="620.5" width="10.5" height="8" fill="none" stroke="#fff" stroke-width="0.9"/>
  <path d="M885.8 628.5 V631 M882.5 631.3 H889" stroke="#fff" stroke-width="0.9"/>
  <rect x="878.6" y="619.6" width="3" height="5.2" fill="#000" stroke="#fff" stroke-width="0.6"/>
  <path d="M896.5 623.5 H898.5 L901.5 620.5 V631 L898.5 628 H896.5 Z" fill="none" stroke="#fff" stroke-width="0.8"/>
  <circle cx="905.2" cy="629.2" r="2.9" fill="#e81123"/>
  <path d="M904 628 L906.4 630.4 M906.4 628 L904 630.4" stroke="#fff" stroke-width="0.6"/>
  <path d="M994.5 620.5 H1006.5 V628.5 H1001.5 L999 631 V628.5 H994.5 Z" fill="none" stroke="#fff" stroke-width="0.9"/>
</svg>

<div class=t style='top:6.30px;height:11px;line-height:11px;font-size:8.4px;color:#e6eef8;letter-spacing:-0.509px;left:24.06px;-webkit-text-stroke:0;'>Firma</div><div class=t style='top:6.30px;height:12px;line-height:12px;font-size:9.6px;color:#333;letter-spacing:-0.300px;left:48.02px;'>Wszystkie</div><div class=t style='top:6.00px;height:11px;line-height:11px;font-size:8.4px;color:#ffffff;letter-spacing:-0.457px;left:406.86px;-webkit-text-stroke:0;'>Faktura Vat Zakup - Numer:FVZ-13 - SUPER 1 - ITE WorkFlow</div><div class=t style='top:26.30px;height:11px;line-height:11px;font-size:8.4px;color:#444;letter-spacing:-0.386px;left:905.96px;'>Adam Pietrek [Admin]</div><div class=t style='top:53.10px;height:11px;line-height:11px;font-size:8.4px;color:#d3deed;letter-spacing:-0.312px;left:62.56px;-webkit-text-stroke:0;'>Wpisz tutaj słowa kluczowe</div><div class=t style='top:81.30px;height:17px;line-height:17px;font-size:12.66px;color:#ffffff;letter-spacing:-0.450px;left:39.49px;-webkit-text-stroke:0;'>Dokumenty</div><div class=t style='top:112.00px;height:12px;line-height:12px;font-size:9.6px;color:#ffffff;letter-spacing:-0.338px;left:39.62px;-webkit-text-stroke:0;'>Wszystkie</div><div class=t style='top:139.00px;height:12px;line-height:12px;font-size:9.6px;color:#ffffff;letter-spacing:-0.273px;left:39.62px;-webkit-text-stroke:0;'>01 Bufor</div><div class=t style='top:166.00px;height:12px;line-height:12px;font-size:9.6px;color:#ffffff;letter-spacing:-0.313px;left:39.62px;-webkit-text-stroke:0;'>02 Ewidencja Maszyn</div><div class=t style='top:193.00px;height:12px;line-height:12px;font-size:9.6px;color:#ffffff;letter-spacing:-0.286px;left:39.62px;-webkit-text-stroke:0;'>03 Faktury cykliczne</div><div class=t style='top:220.00px;height:12px;line-height:12px;font-size:9.6px;color:#ffffff;letter-spacing:-0.261px;left:39.62px;-webkit-text-stroke:0;'>04 Faktury sprzedaży</div><div class=t style='top:247.00px;height:12px;line-height:12px;font-size:9.6px;color:#ffffff;letter-spacing:-0.273px;left:39.62px;-webkit-text-stroke:0;'>05 Faktury zakupu</div><div class=t style='top:274.00px;height:12px;line-height:12px;font-size:9.6px;color:#ffffff;letter-spacing:-0.282px;left:39.62px;-webkit-text-stroke:0;'>05a Faktury zakupu</div><div class=t style='top:301.00px;height:12px;line-height:12px;font-size:9.6px;color:#ffffff;letter-spacing:-0.008px;left:39.62px;-webkit-text-stroke:0;'>06 Import</div><div class=t style='top:328.00px;height:12px;line-height:12px;font-size:9.6px;color:#ffffff;letter-spacing:-0.593px;left:39.62px;-webkit-text-stroke:0;'>07 KP</div><div class=t style='top:355.00px;height:12px;line-height:12px;font-size:9.6px;color:#ffffff;letter-spacing:-0.460px;left:39.62px;-webkit-text-stroke:0;'>08 KT</div><div class=t style='top:382.00px;height:12px;line-height:12px;font-size:9.35px;color:#ffffff;letter-spacing:-0.450px;left:39.63px;-webkit-text-stroke:0;'>09 KW</div><div class=t style='top:409.00px;height:12px;line-height:12px;font-size:9.6px;color:#ffffff;letter-spacing:-0.338px;left:39.62px;-webkit-text-stroke:0;'>10 Rozporządzenia</div><div class=t style='top:436.00px;height:12px;line-height:12px;font-size:9.6px;color:#ffffff;letter-spacing:-0.298px;left:39.62px;-webkit-text-stroke:0;'>11 Szansa Sprzedaży</div><div class=t style='top:463.00px;height:12px;line-height:12px;font-size:9.6px;color:#ffffff;letter-spacing:-0.294px;left:39.62px;-webkit-text-stroke:0;'>12 Umowy</div><div class=t style='top:490.00px;height:12px;line-height:12px;font-size:9.6px;color:#ffffff;letter-spacing:-0.233px;left:39.62px;-webkit-text-stroke:0;'>13 Zamówienia</div><div class=t style='top:517.00px;height:12px;line-height:12px;font-size:9.6px;color:#ffffff;letter-spacing:-0.150px;left:39.62px;-webkit-text-stroke:0;'>14 Oferty</div><div class=t style='top:541.80px;height:17px;line-height:17px;font-size:13px;color:#ffffff;letter-spacing:-0.585px;left:39.48px;-webkit-text-stroke:0;'>Kontrahenci</div><div class=t style='top:52.80px;height:11px;line-height:11px;font-size:8.4px;color:#3c3c3c;letter-spacing:-0.306px;left:207.66px;'>Pulpit</div><div class=t style='top:52.80px;height:11px;line-height:11px;font-size:8.4px;color:#3c3c3c;letter-spacing:-0.317px;left:280.91px;'>05a Faktury zakupu</div><div class=t style='top:52.80px;height:11px;line-height:11px;font-size:8.4px;color:#3d72b8;letter-spacing:-0.356px;left:391.66px;'>Faktura Vat Zakup - Numer:FVZ-13</div><div class=t style='top:98.00px;height:11px;line-height:11px;font-size:8.4px;color:#3c3c3c;letter-spacing:-0.427px;left:223.66px;'>Nowy</div><div class=t style='top:89.10px;height:11px;line-height:11px;font-size:8.4px;color:#3c3c3c;letter-spacing:-0.132px;left:265.66px;'>Firma:</div><div class=t style='top:107.10px;height:11px;line-height:11px;font-size:8.4px;color:#3c3c3c;letter-spacing:0.176px;left:265.66px;'>Pełny nr:</div><div class=t style='top:88.00px;height:13px;line-height:13px;font-size:10.2px;color:#3a3a3a;font-weight:700;letter-spacing:-0.488px;left:312.39px;'>SuperExcellence</div><div class=t style='top:106.30px;height:13px;line-height:13px;font-size:10.2px;color:#3a3a3a;font-weight:700;letter-spacing:0.250px;left:312.39px;'>FVZ 2018/06/13</div><div class=t style='top:89.20px;height:11px;line-height:11px;font-size:8.4px;color:#3c3c3c;letter-spacing:0.211px;left:457.96px;'>Nr Ewid.:</div><div class=t style='top:107.50px;height:11px;line-height:11px;font-size:8.4px;color:#3c3c3c;letter-spacing:-0.106px;left:457.96px;'>Nr FK:</div><div class=t style='top:88.00px;height:13px;line-height:13px;font-size:9.35px;color:#3a3a3a;font-weight:700;letter-spacing:-0.450px;left:504.63px;'>FVZ</div><div class=t style='top:88.00px;height:13px;line-height:13px;font-size:10.2px;color:#3a3a3a;font-weight:700;right:373.00px;text-align:right;'>13</div><div class=t style='top:133.60px;height:11px;line-height:11px;font-size:8.4px;color:#3c3c3c;letter-spacing:0.025px;left:196.66px;'>Bieżący dokument:</div><div class=t style='top:133.60px;height:11px;line-height:11px;font-size:8.4px;color:#3c3c3c;letter-spacing:-0.075px;left:289.66px;'>Odśwież</div><div class=t style='top:133.60px;height:11px;line-height:11px;font-size:8.4px;color:#3c3c3c;letter-spacing:0.005px;left:342.16px;'>Pokaż historię</div><div class=t style='top:133.60px;height:11px;line-height:11px;font-size:8.4px;color:#3c3c3c;letter-spacing:0.186px;left:415.16px;'>Dodaj notatkę</div><div class=t style='top:133.60px;height:11px;line-height:11px;font-size:8.4px;color:#3c3c3c;letter-spacing:-0.031px;left:489.66px;'>Dodaj zadanie</div><div class=t style='top:133.60px;height:11px;line-height:11px;font-size:8.4px;color:#3c3c3c;letter-spacing:0.322px;left:563.41px;'>Wydruk</div><div class=t style='top:163.30px;height:11px;line-height:11px;font-size:8.4px;color:#4a4a4a;letter-spacing:-0.393px;left:213.66px;'>Dokument</div><div class=t style='top:163.80px;height:11px;line-height:11px;font-size:8.4px;color:#4a4a4a;letter-spacing:-0.479px;left:270.41px;'>Załączniki</div><div class=t style='top:163.80px;height:11px;line-height:11px;font-size:8.4px;color:#4a4a4a;letter-spacing:-0.348px;left:324.66px;'>Obraz</div><div class=t style='top:163.80px;height:11px;line-height:11px;font-size:8.4px;color:#4a4a4a;letter-spacing:-0.406px;left:354.16px;'>Dokumenty powiązane</div><div class=t style='top:163.80px;height:11px;line-height:11px;font-size:8.4px;color:#4a4a4a;letter-spacing:-0.481px;left:452.91px;'>Proces</div><div class=t style='top:163.80px;height:11px;line-height:11px;font-size:8.09px;color:#4a4a4a;letter-spacing:-0.450px;left:484.18px;'>Dane FK</div><div class=t style='top:163.80px;height:11px;line-height:11px;font-size:8.4px;color:#4a4a4a;letter-spacing:-0.121px;left:534.66px;'>Projekty</div><div class=t style='top:163.80px;height:11px;line-height:11px;font-size:8.4px;color:#4a4a4a;letter-spacing:-0.432px;left:585.16px;'>Zadania</div><div class=t style='top:163.80px;height:11px;line-height:11px;font-size:8.4px;color:#4a4a4a;letter-spacing:-0.443px;left:634.16px;'>Pozycje</div><div class=t style='top:163.80px;height:11px;line-height:11px;font-size:8.4px;color:#4a4a4a;letter-spacing:-0.234px;left:682.66px;'>Notatki</div><div class=t style='top:163.80px;height:11px;line-height:11px;font-size:8.4px;color:#4a4a4a;letter-spacing:-0.547px;left:728.41px;'>Pliki</div><div class=t style='top:187.70px;height:11px;line-height:11px;font-size:8.4px;color:#3c3c3c;letter-spacing:-0.326px;left:407.86px;'>Akceptuję</div><div class=t style='top:205.40px;height:11px;line-height:11px;font-size:8.4px;color:#3c3c3c;letter-spacing:-0.354px;left:203.56px;'>Data dokumentu</div><div class=t style='top:205.40px;height:11px;line-height:11px;font-size:8.4px;color:#3c3c3c;letter-spacing:-0.139px;left:271.66px;'>07.05.2019</div><div class=t style='top:205.30px;height:11px;line-height:11px;font-size:8.4px;color:#3c3c3c;letter-spacing:-0.329px;left:505.16px;'>Data otrzymania</div><div class=t style='top:205.40px;height:11px;line-height:11px;font-size:8.4px;color:#3c3c3c;letter-spacing:-0.150px;left:573.06px;'>07.05.2019</div><div class=t style='top:222.60px;height:11px;line-height:11px;font-size:8.4px;color:#3c3c3c;letter-spacing:-0.309px;left:203.56px;'>Data sprzedaży</div><div class=t style='top:222.60px;height:11px;line-height:11px;font-size:8.4px;color:#3c3c3c;letter-spacing:-0.139px;left:271.66px;'>07.05.2019</div><div class=t style='top:222.30px;height:11px;line-height:11px;font-size:8.4px;color:#3c3c3c;letter-spacing:-0.303px;left:404.86px;'>Termin płatności</div><div class=t style='top:222.60px;height:11px;line-height:11px;font-size:8.4px;color:#3c3c3c;letter-spacing:-0.128px;left:472.76px;'>07.05.2019</div><div class=t style='top:222.30px;height:11px;line-height:11px;font-size:8.4px;color:#3c3c3c;letter-spacing:-0.323px;left:528.56px;'>Dni płatności</div><div class=t style='top:222.60px;height:11px;line-height:11px;font-size:8.4px;color:#3c3c3c;right:394.00px;text-align:right;'>0</div><div class=t style='top:239.50px;height:11px;line-height:11px;font-size:8.4px;color:#3c3c3c;letter-spacing:-0.443px;left:203.56px;'>Numer obcy</div><div class=t style='top:239.50px;height:11px;line-height:11px;font-size:8.4px;color:#3c3c3c;letter-spacing:-0.319px;left:271.66px;'>024198-2019-406</div><div class=t style='top:239.20px;height:11px;line-height:11px;font-size:8.4px;color:#3c3c3c;letter-spacing:-0.199px;left:404.86px;'>Waluta</div><div class=t style='top:239.40px;height:11px;line-height:11px;font-size:8.4px;color:#3c3c3c;letter-spacing:-0.177px;left:473.46px;'>[Wartość jest pusta]</div><div class=t style='top:256.80px;height:11px;line-height:11px;font-size:8.4px;color:#3c3c3c;letter-spacing:-0.257px;left:203.56px;'>Status płatności</div><div class=t style='top:256.80px;height:11px;line-height:11px;font-size:8.4px;color:#3c3c3c;letter-spacing:-0.174px;left:469.46px;'>Wartość netto</div><div class=t style='top:256.80px;height:11px;line-height:11px;font-size:8.4px;color:#3c3c3c;right:393.20px;text-align:right;'>190,22</div><div class=t style='top:273.70px;height:11px;line-height:11px;font-size:8.4px;color:#3c3c3c;letter-spacing:-0.381px;left:203.66px;'>Wartość VAT</div><div class=t style='top:273.70px;height:11px;line-height:11px;font-size:8.4px;color:#3c3c3c;right:393.20px;text-align:right;'>43,75</div><div class=t style='top:290.90px;height:11px;line-height:11px;font-size:8.4px;color:#3c3c3c;letter-spacing:-0.145px;left:203.66px;'>Wartość brutto</div><div class=t style='top:290.80px;height:11px;line-height:11px;font-size:8.4px;color:#3c3c3c;right:393.20px;text-align:right;'>233,97</div><div class=t style='top:309.30px;height:12px;line-height:12px;font-size:9px;color:#444;font-weight:700;letter-spacing:-0.347px;left:212.24px;'>Podmiot</div><div class=t style='top:332.80px;height:11px;line-height:11px;font-size:8.4px;color:#3c3c3c;letter-spacing:-0.434px;left:212.26px;'>Pracownik</div><div class=t style='top:349.70px;height:11px;line-height:11px;font-size:8.4px;color:#3c3c3c;letter-spacing:-0.398px;left:212.26px;'>NIP</div><div class=t style='top:366.60px;height:11px;line-height:11px;font-size:8.4px;color:#3c3c3c;letter-spacing:-0.257px;left:212.26px;'>Kontrahent</div><div class=t style='top:367.30px;height:10px;line-height:10px;font-size:7.6px;color:#333;letter-spacing:-0.336px;left:279.20px;'>BP EUROPA SE SPÓŁKA EUROPEJSKA ODDZIAŁ W POLSCE</div><div class=t style='top:383.70px;height:11px;line-height:11px;font-size:8.4px;color:#3c3c3c;letter-spacing:-0.305px;left:212.26px;'>Adres</div><div class=t style='top:191.80px;height:11px;line-height:11px;font-size:8.4px;color:#3c3c3c;letter-spacing:-0.425px;left:641.66px;'>Załącznik</div><div class=t style='top:192.10px;height:11px;line-height:11px;font-size:8.4px;color:#333;letter-spacing:0.297px;left:683.46px;'>paliwo_05_2019-1.pdf</div><div class=t style='top:191.80px;height:11px;line-height:11px;font-size:8.4px;color:#3c3c3c;letter-spacing:-0.452px;left:863.46px;'>Wizualizacja</div><div class=t style='top:598.70px;height:11px;line-height:11px;font-size:8.4px;color:#3c3c3c;letter-spacing:-0.527px;left:19.66px;'>Menu</div><div class=t style='top:598.70px;height:11px;line-height:11px;font-size:8.4px;color:#3c3c3c;letter-spacing:-0.297px;left:64.66px;'>Wygląd</div><div class=t style='top:598.70px;height:11px;line-height:11px;font-size:8.4px;color:#3c3c3c;letter-spacing:-0.329px;left:116.66px;'>Edytuj menu</div><div class=t style='top:598.70px;height:11px;line-height:11px;font-size:8.4px;color:#3c3c3c;letter-spacing:-0.395px;left:723.66px;'>Zmień hasło</div><div class=t style='top:599.20px;height:10px;line-height:10px;font-size:7.4px;color:#3c3c3c;letter-spacing:-0.213px;left:779.50px;'>VM32\BI2016\WF_SUPEREXCELLENCE</div><div class=t style='top:598.70px;height:11px;line-height:11px;font-size:8.4px;color:#3c3c3c;letter-spacing:-0.230px;left:921.66px;'>1.55.7420</div><div class=t style='top:598.70px;height:11px;line-height:11px;font-size:7.38px;color:#3c3c3c;letter-spacing:-0.450px;left:967.70px;'>GC</div><div class=t style='top:598.70px;height:11px;line-height:11px;font-size:8.08px;color:#3c3c3c;letter-spacing:-0.450px;left:988.68px;'>Sync DB</div><div class=t style='top:614.80px;height:11px;line-height:11px;font-size:7.91px;color:#ffffff;letter-spacing:-0.450px;left:916.43px;-webkit-text-stroke:0;'>POL</div><div class=t style='top:627.30px;height:11px;line-height:11px;font-size:8.4px;color:#ffffff;letter-spacing:-0.411px;left:915.16px;-webkit-text-stroke:0;'>INTL</div><div class=t style='top:614.80px;height:11px;line-height:11px;font-size:8.4px;color:#ffffff;letter-spacing:-0.105px;left:951.41px;-webkit-text-stroke:0;'>11:13</div><div class=t style='top:627.30px;height:11px;line-height:11px;font-size:8.4px;color:#ffffff;left:940.16px;-webkit-text-stroke:0;'>22.05.2020</div>
</body></html>
